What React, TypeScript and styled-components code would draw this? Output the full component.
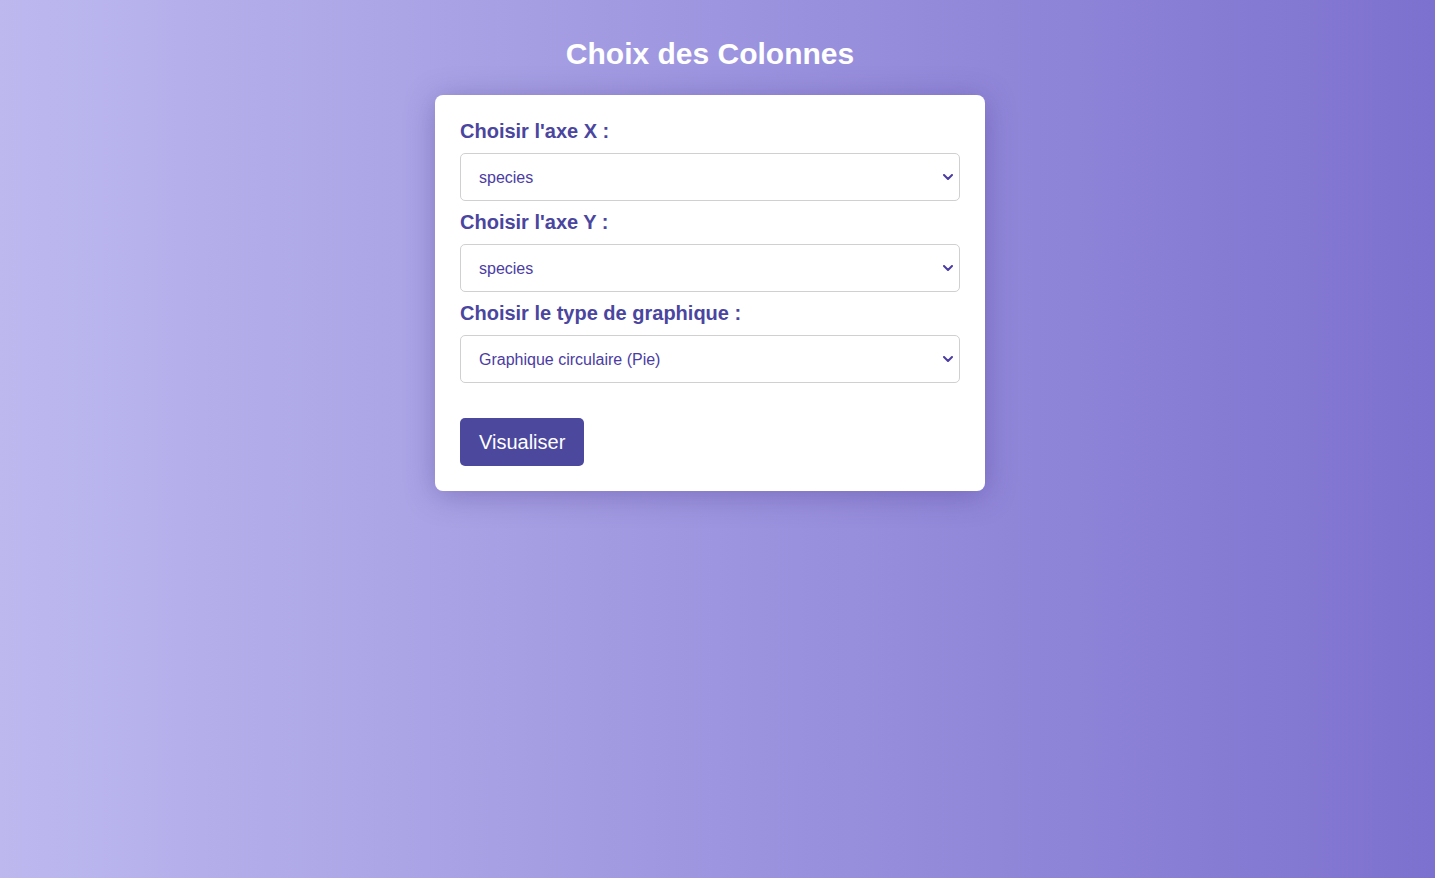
import React, { useState } from "react";
import styled, { createGlobalStyle } from "styled-components";

const Global = createGlobalStyle`
  html, body { margin: 0; padding: 0; }
  body {
    min-height: 100vh;
    font-family: "Liberation Sans", Arial, sans-serif;
    background: linear-gradient(to right, #bdb9ef, #7d71cf);
  }
`;

const Page = styled.main`
  min-height: 100vh;
  display: flex;
  flex-direction: column;
  align-items: center;
  padding: 37px 15px 0 0;
  box-sizing: border-box;
`;

const Title = styled.h1`
  margin: 0 0 24px;
  font-size: 30px;
  line-height: 34px;
  font-weight: 700;
  color: #ffffff;
`;

const Card = styled.form`
  width: 550px;
  box-sizing: border-box;
  background: #ffffff;
  border-radius: 8px;
  padding: 25px;
  box-shadow: 0 4px 30px rgba(60, 40, 130, 0.35);
  display: flex;
  flex-direction: column;
  align-items: flex-start;
`;

const Label = styled.label`
  display: block;
  font-size: 20px;
  line-height: 23px;
  font-weight: 700;
  color: #4a46a0;
  margin-bottom: 10px;
`;

const SelectWrap = styled.div`
  position: relative;
  width: 100%;
  margin-bottom: 10px;
`;

const Select = styled.select`
  display: block;
  width: 100%;
  height: 48px;
  box-sizing: border-box;
  border: 1px solid #d0d0d0;
  border-radius: 5px;
  padding: 0 30px 0 18px;
  font-family: "Liberation Sans", Arial, sans-serif;
  font-size: 16px;
  color: #4b3ca3;
  background: #ffffff;
  outline: none;
  appearance: none;
  -webkit-appearance: none;
`;

const Chevron = styled.svg`
  position: absolute;
  right: 7px;
  top: 50%;
  width: 10px;
  height: 6px;
  margin-top: -3px;
  pointer-events: none;
`;

const Button = styled.button`
  margin-top: 25px;
  height: 48px;
  padding: 0 19px;
  border: none;
  border-radius: 5px;
  background: #4c489e;
  color: #ffffff;
  font-family: "Liberation Sans", Arial, sans-serif;
  font-size: 20px;
  cursor: pointer;
`;

const columns = ["species", "island", "bill_length_mm", "bill_depth_mm", "flipper_length_mm", "body_mass_g", "sex"];

function Dropdown(props: {
  id: string;
  value: string;
  onChange: (v: string) => void;
  options: { value: string; label: string }[];
}) {
  return (
    <SelectWrap>
      <Select id={props.id} value={props.value} onChange={(e) => props.onChange(e.target.value)}>
        {props.options.map((o) => (
          <option key={o.value} value={o.value}>{o.label}</option>
        ))}
      </Select>
      <Chevron viewBox="0 0 10 6" aria-hidden="true">
        <path d="M1 1 L5 5 L9 1" fill="none" stroke="#4b3ca3" strokeWidth="2" strokeLinecap="round" strokeLinejoin="round" />
      </Chevron>
    </SelectWrap>
  );
}

export default function App() {
  const [x, setX] = useState("species");
  const [y, setY] = useState("species");
  const [type, setType] = useState("pie");
  const colOpts = columns.map((c) => ({ value: c, label: c }));
  return (
    <>
      <Global />
      <Page>
        <Title>Choix des Colonnes</Title>
        <Card onSubmit={(e) => e.preventDefault()}>
          <Label htmlFor="x">Choisir l'axe X :</Label>
          <Dropdown id="x" value={x} onChange={setX} options={colOpts} />
          <Label htmlFor="y">Choisir l'axe Y :</Label>
          <Dropdown id="y" value={y} onChange={setY} options={colOpts} />
          <Label htmlFor="type">Choisir le type de graphique :</Label>
          <Dropdown
            id="type"
            value={type}
            onChange={setType}
            options={[
              { value: "pie", label: "Graphique circulaire (Pie)" },
              { value: "bar", label: "Graphique à barres (Bar)" },
              { value: "line", label: "Graphique linéaire (Line)" },
              { value: "scatter", label: "Nuage de points (Scatter)" },
            ]}
          />
          <Button type="submit">Visualiser</Button>
        </Card>
      </Page>
    </>
  );
}
